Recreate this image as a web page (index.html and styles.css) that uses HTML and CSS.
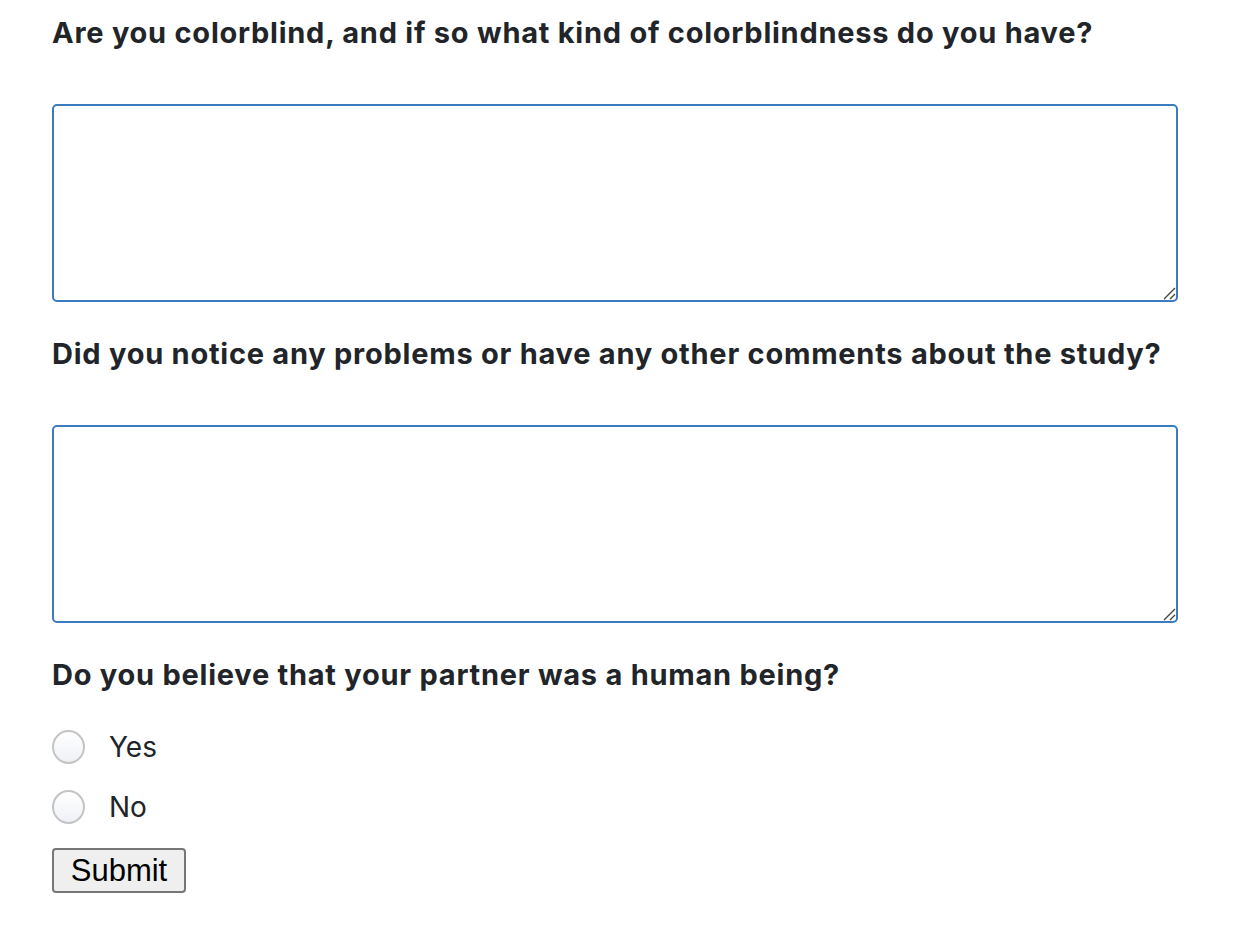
FILE: index.html
```html
<!DOCTYPE html>
<html lang="en">
<head>
<meta charset="utf-8">
<title>Survey</title>
<link rel="stylesheet" href="styles.css">
</head>
<body>
<form class="survey">
  <div class="question">
    <label class="q-label" for="q1">Are you colorblind, and if so what kind of colorblindness do you have?</label>
    <textarea id="q1" class="answer"></textarea>
  </div>
  <div class="question">
    <label class="q-label" for="q2">Did you notice any problems or have any other comments about the study?</label>
    <textarea id="q2" class="answer"></textarea>
  </div>
  <div class="question">
    <div class="q-label">Do you believe that your partner was a human being?</div>
    <div class="choices">
      <label class="choice"><input type="radio" name="human" class="radio"><span>Yes</span></label>
      <label class="choice"><input type="radio" name="human" class="radio"><span>No</span></label>
    </div>
  </div>
  <button type="button" class="submit">Submit</button>
</form>
</body>
</html>
```
FILE: styles.css
```css
html, body {
  margin: 0;
  padding: 0;
  background: #ffffff;
}

.survey {
  display: flex;
  flex-direction: column;
  align-items: flex-start;
  width: 1126px;
  padding: 16px 0 0 52px;
  font-family: Inter, "Noto Sans", sans-serif;
  color: #212529;
}

.question {
  display: flex;
  flex-direction: column;
  width: 100%;
}

.q-label {
  display: block;
  font-size: 29px;
  line-height: 34px;
  font-weight: 700;
  letter-spacing: 0.75px;
  color: #212529;
  white-space: nowrap;
}

.answer {
  display: block;
  box-sizing: border-box;
  width: 1126px;
  height: 198px;
  margin: 54px 0 35px;
  border: 2px solid #3b7cc1;
  border-radius: 5px;
  background: #ffffff;
  outline: none;
  font-family: inherit;
}

.answer::-webkit-resizer {
  background: url("data:image/svg+xml;utf8,<svg xmlns='http://www.w3.org/2000/svg' width='14' height='14'><path d='M13 2 L2 13 M13 8 L8 13' stroke='%23444' stroke-width='1.4' fill='none'/></svg>") no-repeat right bottom;
}

.choices {
  display: flex;
  flex-direction: column;
  gap: 26px;
  margin-top: 38px;
}

.choice {
  display: flex;
  align-items: center;
  gap: 24px;
  height: 34px;
  font-size: 28px;
  font-weight: 400;
  color: #212529;
}

.radio {
  appearance: none;
  -webkit-appearance: none;
  box-sizing: border-box;
  width: 33px;
  height: 34px;
  margin: 0;
  border: 2px solid #c4c4c4;
  border-radius: 50%;
  background: linear-gradient(#ffffff, #eef1f6);
}

.submit {
  box-sizing: border-box;
  width: 134px;
  height: 45px;
  margin-top: 24px;
  padding: 0;
  border: 2px solid #777777;
  border-radius: 4px;
  background: #efefef;
  font-family: "Liberation Sans", Arial, sans-serif;
  font-size: 31px;
  color: #000000;
}
```
